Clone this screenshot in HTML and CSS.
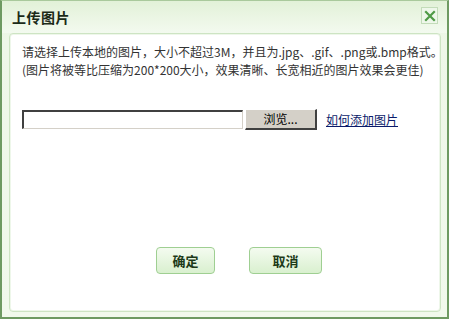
FILE: index.html
```html
<!DOCTYPE html>
<html>
<head>
<meta charset="utf-8">
<link rel="stylesheet" href="styles.css">
</head>
<body>
<div class="dialog">
  <div class="titlebar">
    <span class="title">上传图片</span>
    <span class="close">
      <svg width="12" height="12" viewBox="0 0 12 12"><path d="M2 2 L10 10 M10 2 L2 10" stroke="#4f9a46" stroke-width="2.2" stroke-linecap="square"/></svg>
    </span>
  </div>
  <div class="panel">
    <p class="desc">请选择上传本地的图片，大小不超过3M，并且为.jpg、.gif、.png或.bmp格式。<br>(图片将被等比压缩为200*200大小，效果清晰、长宽相近的图片效果会更佳)</p>
    <div class="filerow">
      <span class="fileinput"></span>
      <span class="browse">浏览...</span>
      <a class="help" href="#">如何添加图片</a>
    </div>
    <div class="actions">
      <span class="btn">确定</span>
      <span class="btn">取消</span>
    </div>
  </div>
</div>
</body>
</html>
```
FILE: styles.css
```css
html, body { margin: 0; padding: 0; }
body { width: 449px; height: 319px; overflow: hidden; font-family: "Noto Sans CJK SC", "DejaVu Sans", sans-serif; }
.dialog {
  box-sizing: border-box;
  width: 449px; height: 319px;
  border-left: 2px solid #6e9a62;
  border-right: 2px solid #6e9a62;
  border-bottom: 2px solid #6e9a62;
  border-top: 1px solid #a9c99c;
  background: linear-gradient(#e6f3dd, #eef7e8 40px, #f1f9ec);
  display: flex; flex-direction: column;
}
.titlebar {
  height: 32px; flex: none;
  display: flex; align-items: center; justify-content: space-between;
  padding: 0 9px 0 10px;
  background: linear-gradient(#e2f1d8, #f3faef);
}
.title { font-size: 14px; font-weight: bold; color: #1b2a18; letter-spacing: 0.5px; }
.close {
  width: 17px; height: 17px; box-sizing: border-box;
  border: 1px solid #c3dcb9; background: #eef7ea;
  display: flex; align-items: center; justify-content: center;
  margin-top: -3px;
}
.panel {
  flex: 1;
  margin: 0 6px 5px 7px;
  background: #fff;
  border: 1px solid #cde4c3;
  border-radius: 4px;
  box-shadow: inset 0 0 0 1px #eef7ea;
  display: flex; flex-direction: column;
  padding: 0 0 0 12px;
}
.desc { margin: 9px 0 0; font-size: 12px; line-height: 18px; color: #333; letter-spacing: 0; white-space: nowrap; }
.filerow { display: flex; align-items: center; margin-top: 30px; height: 21px; }
.fileinput {
  box-sizing: border-box; width: 221px; height: 19px;
  border-top: 2px solid #404040; border-left: 2px solid #404040;
  border-right: 1px solid #d4d0c8; border-bottom: 1px solid #d4d0c8;
  background: #fff;
}
.browse {
  box-sizing: border-box; width: 72px; height: 21px; margin-left: 2px;
  background: #d4d0c8;
  border-top: 1px solid #fff; border-left: 1px solid #fff;
  border-right: 2px solid #404040; border-bottom: 2px solid #404040;
  font-size: 12px; color: #000; text-align: center; line-height: 17px;
}
.help { margin-left: 9px; font-size: 12px; color: #0a1a6a; text-decoration: underline; }
.actions { display: flex; gap: 34px; margin-top: 117px; margin-left: 134px; }
.btn {
  box-sizing: border-box; width: 59px; height: 27px;
  border: 1px solid #9fcf92; border-radius: 4px;
  background: linear-gradient(#f4fbf0, #d9f0cf);
  font-size: 13px; font-weight: bold; color: #1c3a18;
  display: flex; align-items: center; justify-content: center;
}
.btn + .btn { width: 73px; }
```
